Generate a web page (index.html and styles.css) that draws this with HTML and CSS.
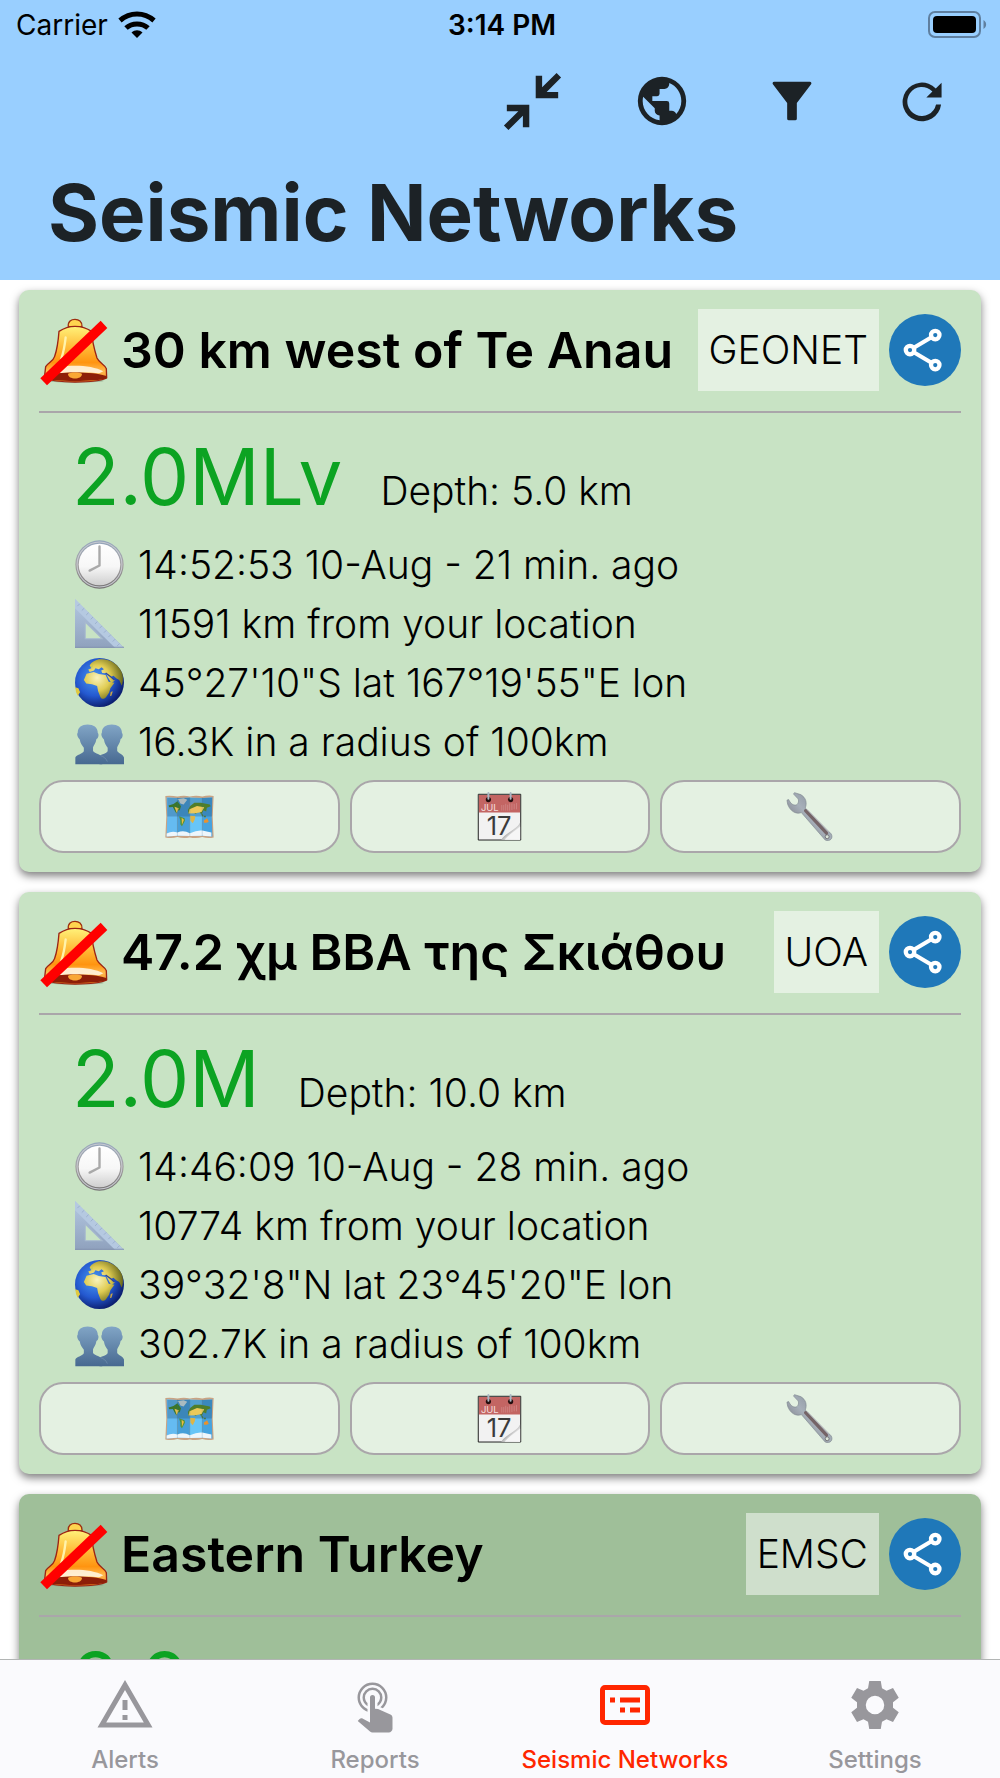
FILE: index.html
```html
<!DOCTYPE html>
<html lang="en">
<head>
    <meta charset="UTF-8">
    <meta name="viewport" content="width=device-width, initial-scale=1.0">
    <title>Seismic Networks</title>
    <link rel="stylesheet" href="styles.css">
</head>
<body>
    <!-- shared icons -->
    <svg class="sprite" aria-hidden="true">
        <defs>
            <linearGradient id="bell-fill" x1="0" y1="0" x2="0" y2="1">
                <stop offset="0" stop-color="#fff27a"/>
                <stop offset="0.35" stop-color="#ffbe3c"/>
                <stop offset="0.65" stop-color="#ff9410"/>
                <stop offset="0.8" stop-color="#ffb94e"/>
                <stop offset="1" stop-color="#f58a1c"/>
            </linearGradient>
            <linearGradient id="clock-rim" x1="0" y1="0" x2="0" y2="1">
                <stop offset="0" stop-color="#94a6bd"/>
                <stop offset="0.5" stop-color="#a5a2a3"/>
                <stop offset="1" stop-color="#757273"/>
            </linearGradient>
            <linearGradient id="clock-face" x1="0" y1="0" x2="0" y2="1">
                <stop offset="0" stop-color="#fff"/>
                <stop offset="0.55" stop-color="#f7f7f7"/>
                <stop offset="1" stop-color="#cfcfcf"/>
            </linearGradient>
            <linearGradient id="ruler-fill" x1="0" y1="0" x2="0" y2="1">
                <stop offset="0" stop-color="#b4c8e2"/>
                <stop offset="1" stop-color="#8fa1bd"/>
            </linearGradient>
            <radialGradient id="sea" cx="0.4" cy="0.4" r="0.62">
                <stop offset="0" stop-color="#4a9af0"/>
                <stop offset="0.6" stop-color="#2459d0"/>
                <stop offset="1" stop-color="#0c1f70"/>
            </radialGradient>
            <radialGradient id="land" gradientUnits="userSpaceOnUse" cx="65" cy="58" r="75">
                <stop offset="0" stop-color="#f8f3bd"/>
                <stop offset="0.5" stop-color="#e0cc52"/>
                <stop offset="1" stop-color="#6b6a1c"/>
            </radialGradient>
            <linearGradient id="people-fill" x1="0" y1="0" x2="0" y2="1">
                <stop offset="0" stop-color="#81a5c6"/>
                <stop offset="1" stop-color="#476990"/>
            </linearGradient>
            <linearGradient id="steel" x1="0" y1="1" x2="1" y2="0">
                <stop offset="0" stop-color="#5d5961"/>
                <stop offset="0.5" stop-color="#a7b0ba"/>
                <stop offset="1" stop-color="#77808b"/>
            </linearGradient>
            <linearGradient id="page-curl" x1="0" y1="0" x2="1" y2="1">
                <stop offset="0.3" stop-color="#666"/>
                <stop offset="0.6" stop-color="#ddd"/>
                <stop offset="1" stop-color="#fff"/>
            </linearGradient>

            <symbol id="icon-bell-off" viewBox="0 -12 204 216">
                <ellipse cx="105" cy="188" rx="86" ry="6" fill="#7b8f76" opacity="0.6"/>
                <path d="M85 26C83 10 94 4 105 4s22 6 21 22z" fill="#ffd44f" stroke="#9c2e10" stroke-width="4"/>
                <path d="M57 40C72 30 90 25 105 25s35 5 50 15C156 70 164 98 171 120C178 136 196 140 199 152L200 180C180 190 140 192 105 192S35 190 13 180L17 146C24 134 40 130 44 115C52 92 55 66 57 40Z" fill="url(#bell-fill)" stroke="#9c2414" stroke-width="4" stroke-linejoin="round"/>
                <path d="M77 58C74 85 70 104 64 122" fill="none" stroke="#fff3ab" stroke-width="7" stroke-linecap="round"/>
                <path d="M24 160C60 138 150 138 190 160L178 166C150 162 55 162 35 168Z" fill="#fff8e9" opacity="0.85"/>
                <path d="M14 174C50 160 160 160 199 174L200 181C170 192 35 192 13 181Z" fill="#8d1e08"/>
                <path d="M84 168C88 162 122 162 126 168C126 186 84 186 84 168Z" fill="#f9a735"/>
                <path d="M182 8L202 30L21 202L1 181Z" fill="#f00"/>
            </symbol>
            <symbol id="icon-share" viewBox="0 0 24 24">
                <path d="M6 12L16.100 6M6 12L16.100 18" fill="none" stroke="#fff" stroke-width="1.600"/>
                <g fill="#1f78b9" stroke="#fff" stroke-width="1.700">
                    <circle cx="6" cy="12" r="1.700"/>
                    <circle cx="16.100" cy="6" r="1.700"/>
                    <circle cx="16.100" cy="18" r="1.700"/>
                </g>
            </symbol>
            <symbol id="icon-clock" viewBox="0 0 144 144">
                <circle cx="72" cy="72" r="71" fill="url(#clock-rim)"/>
                <circle cx="72" cy="72" r="66" fill="none" stroke="#c7cad0" stroke-width="3"/>
                <circle cx="72" cy="72" r="61" fill="url(#clock-face)"/>
                <path d="M72 19V75L43 90" fill="none" stroke="#a9a9a9" stroke-width="7" stroke-linecap="round" stroke-linejoin="round"/>
            </symbol>
            <symbol id="icon-ruler" viewBox="0 0 144 144">
                <path d="M0 0L144 144H0ZM30 68V117H80Z" fill="url(#ruler-fill)" fill-rule="evenodd"/>
                <path d="M0 0L144 144H118L0 27Z" fill="#b5c9e1"/>
                <path d="M14 14L7 21M27 27L20 34M40 40L33 47M53 53L46 60M66 66L59 73M79 79L72 86M92 92L85 99M105 105L98 112M118 118L111 125M131 131L124 138" stroke="#8fa5c4" stroke-width="2"/>
                <path d="M30 117V68L80 117Z" fill="none" stroke="#a7b9cf" stroke-width="3"/>
                <path d="M0 142H144" stroke="#8495b0" stroke-width="3"/>
            </symbol>
            <symbol id="icon-globe" viewBox="0 0 144 144">
                <circle cx="72" cy="72" r="72" fill="url(#sea)"/>
                <path d="M43 21C49 12 58 7 70 4C100 0 127 16 138 43C143 57 141 74 137 81L130 65L122 60L113 52L107 55L117 66L107 74L97 57L91 45L80 44L77 37L85 33L78 27L70 33L60 30L56 37L43 41L39 34L48 30Z" fill="url(#land)"/>
                <path d="M34 46L55 41L70 47L90 50L99 70L116 73L104 89L100 102L91 115C84 122 77 121 74 113L68 98L65 82L50 77L33 75L26 65Z" fill="url(#land)"/>
                <path d="M105 100L111 98L107 111L103 112Z" fill="#caa647"/>
                <path d="M1 86L10 89L15 101L8 111Q1 99 1 86Z" fill="#dfc940"/>
                <path d="M46 25L53 20L50 30Z" fill="#bccb60"/>
                <path d="M90 44L105 55L116 65" fill="none" stroke="#2c449b" stroke-width="4"/>
            </symbol>
            <symbol id="icon-people" viewBox="0 0 144 144">
                <path d="M8 46C8 30 20 22 37 22s30 8 30 25c4 3 2 15-4 18c-2 13-8 19-10 24v11c6 8 24 10 27 19v20H1V119c3-8 20-9 25-18V90C21 84 16 78 14 66C8 61 4 50 8 46Z" fill="url(#people-fill)"/>
                <path d="M79 46C79 30 91 22 108 22s30 8 30 25c4 3 2 15-4 18c-2 13-8 19-10 24v11c6 8 17 10 20 19v20H72V113c10-3 19-5 24-12V90c-5-6-9-12-11-24C79 61 75 50 79 46Z" fill="url(#people-fill)"/>
                <path d="M74 113C85 116 92 123 95 131" fill="none" stroke="#7391b0" stroke-width="2"/>
            </symbol>
            <symbol id="icon-map" viewBox="0 0 150 150">
                <path d="M1 12Q20 10 38 14Q58 9 76 14Q96 9 114 14Q132 9 149 12L146 75L149 139Q132 143 114 138Q96 143 76 139Q57 143 38 138Q20 143 1 139L4 75Z" fill="#c9a384"/>
                <path d="M5 16L38 18V134L5 136L7 75Z" fill="#65bbf1"/>
                <path d="M38 18L76 17V135L38 134Z" fill="#479fd8"/>
                <path d="M76 17L114 18V134L76 135Z" fill="#68c5f7"/>
                <path d="M114 18L145 16L143 75L145 136L114 134Z" fill="#46a3df"/>
                <path d="M7 18H144V75H7Z" fill="#214c72" opacity="0.3"/>
                <path d="M11 41L26 37L38 28L49 44L45 56L39 57L35 66L29 56L24 46L13 47Z" fill="#3b762b"/>
                <path d="M34 22L57 19L68 24L57 38L47 35L41 23Z" fill="#a9bbc0"/>
                <path d="M29 45L42 50L36 64Z" fill="#e5bf4f"/>
                <path d="M43 74L60 80L61 88L52 105L47 99L47 87Z" fill="#559238"/>
                <path d="M51 79L58 85L52 100Z" fill="#f0bb41"/>
                <path d="M77 43L90 33L110 33L137 38L140 44L128 48L126 60L118 56L111 69L105 59L93 67L83 59L72 67L70 55Z" fill="#507e29"/>
                <path d="M75 53L98 43L120 47L112 61L94 65L72 66Z" fill="#edc95a"/>
                <path d="M77 73L93 74L91 84L85 96L78 88Z" fill="#ddb547"/>
                <path d="M119 87L129 80L134 91L128 94L119 94Z" fill="#e8922e"/>
                <path d="M119 75h6M113 67l3 7" stroke="#4a7640" stroke-width="4"/>
                <path d="M5 127Q22 118 38 124Q57 116 76 126Q99 116 114 118L142 124V136L114 134L76 135L38 134L5 136Z" fill="#eef6fb"/>
                <path d="M38 17V135M76 17V135M114 17V135" stroke="#28719b" stroke-width="1" opacity="0.6"/>
            </symbol>
            <symbol id="icon-calendar" viewBox="0 0 150 150">
                <path d="M10 7H140V147H10Z" fill="#f2f2f2" stroke="#1d1d1d" stroke-width="3"/>
                <path d="M12 9H138V63H12Z" fill="#c36563"/>
                <circle cx="41" cy="23" r="8" fill="#230e0e"/>
                <circle cx="109" cy="23" r="8" fill="#230e0e"/>
                <path d="M41 3V21M109 3V21" stroke="#aab7c3" stroke-width="6" stroke-linecap="round"/>
                <path d="M82 40V57M88 40V57M94 36V57M100 39V57M106 35V57M113 35V55M120 36V53M127 34V53" stroke="#d49090" stroke-width="2"/>
                <text class="cal-month" x="18" y="58">JUL</text>
                <text class="cal-day" x="36" y="132">17</text>
                <path d="M138 93C128 115 98 121 80 146H138Z" fill="url(#page-curl)"/>
                <path d="M138 106C126 117 105 128 91 146H138Z" fill="#f6f6f6"/>
            </symbol>
            <symbol id="icon-wrench" viewBox="0 0 150 150">
                <path d="M26 2L45 8C61 17 65 33 59 49L138 128C146 141 135 153 120 147L47 63C29 70 11 56 5 37L3 25L8 23C14 35 21 41 30 40C36 39 41 29 37 21L23 6Z" fill="url(#steel)" stroke="#7e878f" stroke-width="2"/>
                <path d="M60 57L124 126" stroke="#756467" stroke-width="10" stroke-linecap="round"/>
                <path d="M66 55L130 121" stroke="#b8b9bd" stroke-width="3" stroke-linecap="round"/>
                <circle cx="126" cy="137" r="6" fill="#dbe5d9" stroke="#555157" stroke-width="2"/>
            </symbol>
        </defs>
    </svg>

    <header class="header">
        <div class="status-bar">
            <div class="carrier">
                <span>Carrier</span>
                <svg class="wifi" viewBox="0 0 38 28" aria-hidden="true">
                    <g fill="none" stroke="#000" stroke-width="5">
                        <path d="M2 9.500C12 .8 26 .8 36 9.500"/>
                        <path d="M8 17C14 11.500 24 11.500 30 17"/>
                    </g>
                    <path d="M13.500 21.500C17 18.500 21 18.500 24.500 21.500L19 27Z"/>
                </svg>
            </div>
            <span class="time">3:14 PM</span>
            <svg class="battery" viewBox="0 0 60 28" aria-hidden="true">
                <rect x="1" y="1" width="51" height="25" rx="6" fill="none" stroke="#5f7f9f" stroke-width="2"/>
                <rect x="5" y="5" width="43" height="17" rx="4"/>
                <path d="M55.500 9C59 11 59 16 55.500 18Z" fill="#5f7f9f"/>
            </svg>
        </div>
        <div class="toolbar">
            <button class="tool" type="button" aria-label="Collapse">
                <svg class="tool-icon tool-icon-large" viewBox="0 0 24 24"><path d="M19.500 3.090L15 7.590V4H13V11H20V9H16.410L20.910 4.500ZM4 13V15H7.590L3.090 19.500L4.500 20.910L9 16.410V20H11V13Z"/></svg>
            </button>
            <button class="tool" type="button" aria-label="World map">
                <svg class="tool-icon" viewBox="0 0 24 24"><path d="M17.9,17.39C17.64,16.59 16.89,16 16,16H15V13A1,1 0 0,0 14,12H8V10H10A1,1 0 0,0 11,9V7H13A2,2 0 0,0 15,5V4.59C17.93,5.77 20,8.64 20,12C20,14.08 19.2,15.97 17.9,17.39M11,19.93C7.05,19.44 4,16.08 4,12C4,11.38 4.08,10.78 4.21,10.21L9,15V16A2,2 0 0,0 11,18M12,2A10,10 0 0,0 2,12A10,10 0 0,0 12,22A10,10 0 0,0 22,12A10,10 0 0,0 12,2Z"/></svg>
            </button>
            <button class="tool" type="button" aria-label="Filter">
                <svg class="tool-icon" viewBox="0 0 24 24"><path d="M4.600 4H19.400C20 4 20.200 4.700 19.900 5.100L14 12.800V19.300Q14 20 13.300 20H10.700Q10 20 10 19.300V12.800L4.100 5.100C3.800 4.700 4 4 4.600 4Z"/></svg>
            </button>
            <button class="tool" type="button" aria-label="Refresh">
                <svg class="tool-icon" viewBox="0 0 24 24"><path d="M20.100 4.400V10.600H13.800L16.300 8.100A6 6 0 1 0 17.800 13.400H19.900A8 8 0 1 1 17.700 6.800Z"/></svg>
            </button>
        </div>
        <h1>Seismic Networks</h1>
    </header>

    <main class="list">
        <article class="card">
            <div class="card-header">
                <svg class="bell"><use href="#icon-bell-off"/></svg>
                <h2>30 km west of Te Anau</h2>
                <span class="network">GEONET</span>
                <button class="share" type="button" aria-label="Share"><svg class="share-icon"><use href="#icon-share"/></svg></button>
            </div>
            <div class="summary">
                <span class="magnitude">2.0MLv</span>
                <span class="depth">Depth: 5.0 km</span>
            </div>
            <ul class="details">
                <li><svg class="emoji"><use href="#icon-clock"/></svg>14:52:53 10-Aug - 21 min. ago</li>
                <li><svg class="emoji"><use href="#icon-ruler"/></svg>11591 km from your location</li>
                <li><svg class="emoji"><use href="#icon-globe"/></svg>45°27'10"S lat 167°19'55"E lon</li>
                <li><svg class="emoji"><use href="#icon-people"/></svg>16.3K in a radius of 100km</li>
            </ul>
            <div class="actions">
                <button class="action" type="button" aria-label="Map"><svg class="emoji"><use href="#icon-map"/></svg></button>
                <button class="action" type="button" aria-label="Calendar"><svg class="emoji"><use href="#icon-calendar"/></svg></button>
                <button class="action" type="button" aria-label="Tools"><svg class="emoji"><use href="#icon-wrench"/></svg></button>
            </div>
        </article>

        <article class="card">
            <div class="card-header">
                <svg class="bell"><use href="#icon-bell-off"/></svg>
                <h2 lang="el">47.2 χμ ΒΒΑ της Σκιάθου</h2>
                <span class="network">UOA</span>
                <button class="share" type="button" aria-label="Share"><svg class="share-icon"><use href="#icon-share"/></svg></button>
            </div>
            <div class="summary">
                <span class="magnitude">2.0M</span>
                <span class="depth">Depth: 10.0 km</span>
            </div>
            <ul class="details">
                <li><svg class="emoji"><use href="#icon-clock"/></svg>14:46:09 10-Aug - 28 min. ago</li>
                <li><svg class="emoji"><use href="#icon-ruler"/></svg>10774 km from your location</li>
                <li><svg class="emoji"><use href="#icon-globe"/></svg>39°32'8"N lat 23°45'20"E lon</li>
                <li><svg class="emoji"><use href="#icon-people"/></svg>302.7K in a radius of 100km</li>
            </ul>
            <div class="actions">
                <button class="action" type="button" aria-label="Map"><svg class="emoji"><use href="#icon-map"/></svg></button>
                <button class="action" type="button" aria-label="Calendar"><svg class="emoji"><use href="#icon-calendar"/></svg></button>
                <button class="action" type="button" aria-label="Tools"><svg class="emoji"><use href="#icon-wrench"/></svg></button>
            </div>
        </article>

        <article class="card card-dark">
            <div class="card-header">
                <svg class="bell"><use href="#icon-bell-off"/></svg>
                <h2>Eastern Turkey</h2>
                <span class="network">EMSC</span>
                <button class="share" type="button" aria-label="Share"><svg class="share-icon"><use href="#icon-share"/></svg></button>
            </div>
            <div class="summary">
                <span class="magnitude">2.0</span>
            </div>
        </article>
    </main>

    <nav class="tabs">
        <a class="tab" href="#alerts">
            <svg class="tab-icon" viewBox="0 0 24 24"><path d="M12,2L1,21H23M12,6L19.530,19H4.470M11,10V14H13V10M11,16V18H13V16" fill-rule="evenodd"/></svg>
            Alerts
        </a>
        <a class="tab" href="#reports">
            <svg class="tab-icon" viewBox="0 0 24 24"><path d="M10,9A1,1 0 0,1 11,8A1,1 0 0,1 12,9V13.47L13.21,13.6L18.15,15.79C18.68,16.03 19,16.56 19,17.14V21.5C18.97,22.32 18.32,22.97 17.5,23H11C10.62,23 10.26,22.85 10,22.57L5.1,18.37L5.84,17.6C6.03,17.39 6.3,17.28 6.58,17.28H6.8L10,19V9M11,5A4,4 0 0,1 15,9C15,10.5 14.2,11.77 13,12.46V11.24C13.61,10.69 14,9.89 14,9A3,3 0 0,0 11,6A3,3 0 0,0 8,9C8,9.89 8.39,10.69 9,11.24V12.46C7.8,11.77 7,10.5 7,9A4,4 0 0,1 11,5M11,3A6,6 0 0,1 17,9C17,10.7 16.29,12.23 15.16,13.33L14.16,12.88C15.28,11.96 16,10.56 16,9A5,5 0 0,0 11,4A5,5 0 0,0 6,9C6,11.05 7.23,12.81 9,13.58V14.66C6.67,13.83 5,11.61 5,9A6,6 0 0,1 11,3Z"/></svg>
            Reports
        </a>
        <a class="tab tab-active" href="#networks" aria-current="page">
            <svg class="tab-icon" viewBox="0 0 24 24"><path d="M4 4H20A2 2 0 0 1 22 6V18A2 2 0 0 1 20 20H4A2 2 0 0 1 2 18V6A2 2 0 0 1 4 4ZM4 6V18H20V6ZM6 9H8V11H6ZM10 9H18V11H10ZM10 13H12V15H10ZM14 13H18V15H14Z" fill-rule="evenodd"/></svg>
            Seismic Networks
        </a>
        <a class="tab" href="#settings">
            <svg class="tab-icon" viewBox="0 0 24 24"><path d="M9.700 2.400H14.300L14.800 5.300L16.600 6.300L19.200 5.200L21.500 9.100L19.200 10.900V13.100L21.500 14.900L19.200 18.800L16.600 17.700L14.800 18.700L14.300 21.600H9.700L9.200 18.700L7.400 17.700L4.800 18.800L2.500 14.900L4.800 13.100V10.900L2.500 9.100L4.800 5.200L7.400 6.300L9.200 5.300ZM12 8.300A3.700 3.700 0 1 0 12 15.700A3.700 3.700 0 1 0 12 8.300Z" fill-rule="evenodd"/></svg>
            Settings
        </a>
    </nav>
</body>
</html>
```

FILE: styles.css
```css
* {
    box-sizing: border-box;
}
body {
    margin: 0;
    height: 100vh;
    display: flex;
    flex-direction: column;
    font-family: Inter, "Noto Sans", sans-serif;
    background-color: #fff;
    color: #000;
}
button {
    border: 0;
    padding: 0;
    background: none;
    font-family: inherit;
    cursor: pointer;
}
svg {
    display: block;
    flex-shrink: 0;
}
.sprite {
    position: absolute;
    width: 0;
    height: 0;
}

/* header */
.header {
    flex-shrink: 0;
    background-color: #99cfff;
    padding-bottom: 19px;
}
.status-bar {
    display: grid;
    grid-template-columns: 1fr auto 1fr;
    align-items: center;
    height: 50px;
    padding: 0 12px 0 16px;
    font-size: 28px;
}
.carrier {
    display: flex;
    align-items: center;
    gap: 10px;
    font-weight: 400;
}
.wifi {
    width: 38px;
    height: 28px;
}
.time {
    font-weight: 600;
}
.battery {
    width: 60px;
    height: 28px;
    justify-self: end;
}
.toolbar {
    display: flex;
    justify-content: flex-end;
    padding-right: 13px;
}
.tool {
    display: flex;
    align-items: center;
    justify-content: center;
    width: 130px;
    height: 102px;
}
.tool-icon {
    width: 58px;
    height: 58px;
    fill: #1c2226;
}
.tool-icon-large {
    width: 77px;
    height: 77px;
}
h1 {
    margin: 0;
    padding: 13px 48px 0;
    font-size: 78px;
    line-height: 96px;
    color: #1c2226;
}

/* cards */
.list {
    flex: 1;
    min-height: 0;
    overflow: hidden;
    display: flex;
    flex-direction: column;
    gap: 20px;
    padding: 10px 19px;
}
.card {
    flex-shrink: 0;
    padding: 19px 20px;
    border-radius: 10px;
    background-color: #c8e3c4;
    box-shadow: 0 4px 8px rgba(0, 0, 0, 0.5);
}
.card-dark {
    background-color: #9fbf99;
}
.card-header {
    display: flex;
    align-items: center;
    gap: 10px;
    padding-bottom: 20px;
    border-bottom: 2px solid #aaa6aa;
}
.bell {
    width: 70px;
    height: 72px;
}
h2 {
    flex: 1;
    margin: 0;
    padding-left: 2px;
    font-size: 50px;
    font-weight: 600;
    white-space: nowrap;
}
.network {
    padding: 0 11px;
    font-size: 39px;
    font-weight: 300;
    line-height: 82px;
    background-color: rgba(255, 255, 255, 0.5);
}
.share {
    display: flex;
    align-items: center;
    justify-content: center;
    width: 72px;
    height: 72px;
    border-radius: 50%;
    background-color: #1f78b9;
}
.share-icon {
    width: 60px;
    height: 60px;
}
.summary {
    display: flex;
    align-items: baseline;
    gap: 38px;
    padding: 16px 33px 10px;
}
.magnitude {
    font-size: 78px;
    line-height: 96px;
    color: #0ca322;
}
.depth {
    font-size: 39px;
    font-weight: 300;
    line-height: 48px;
}
.details {
    margin: 0;
    padding: 0 36px;
    list-style: none;
    font-size: 39px;
    font-weight: 300;
    line-height: 59px;
}
.details li {
    display: flex;
    align-items: center;
    gap: 14px;
}
.emoji {
    width: 49px;
    height: 49px;
}
.actions {
    display: grid;
    grid-template-columns: repeat(3, 1fr);
    gap: 10px;
    margin-top: 9px;
}
.action {
    display: flex;
    align-items: center;
    justify-content: center;
    height: 73px;
    border: 2px solid #aaa6aa;
    border-radius: 24px;
    background-color: rgba(255, 255, 255, 0.5);
}
.cal-month {
    font-size: 29px;
    fill: #f5dede;
}
.cal-day {
    font-size: 78px;
    fill: #3b3b3b;
}

/* bottom tabs */
.tabs {
    flex-shrink: 0;
    display: grid;
    grid-template-columns: repeat(4, 1fr);
    border-top: 1px solid #b2b5b4;
    background-color: #fafafd;
}
.tab {
    display: flex;
    flex-direction: column;
    align-items: center;
    gap: 10px;
    padding: 15px 0 3px;
    font-size: 24px;
    font-weight: 500;
    line-height: 30px;
    color: #98979c;
    text-decoration: none;
}
.tab-active {
    color: #ff2600;
}
.tab-icon {
    width: 60px;
    height: 60px;
    fill: currentColor;
}
```
